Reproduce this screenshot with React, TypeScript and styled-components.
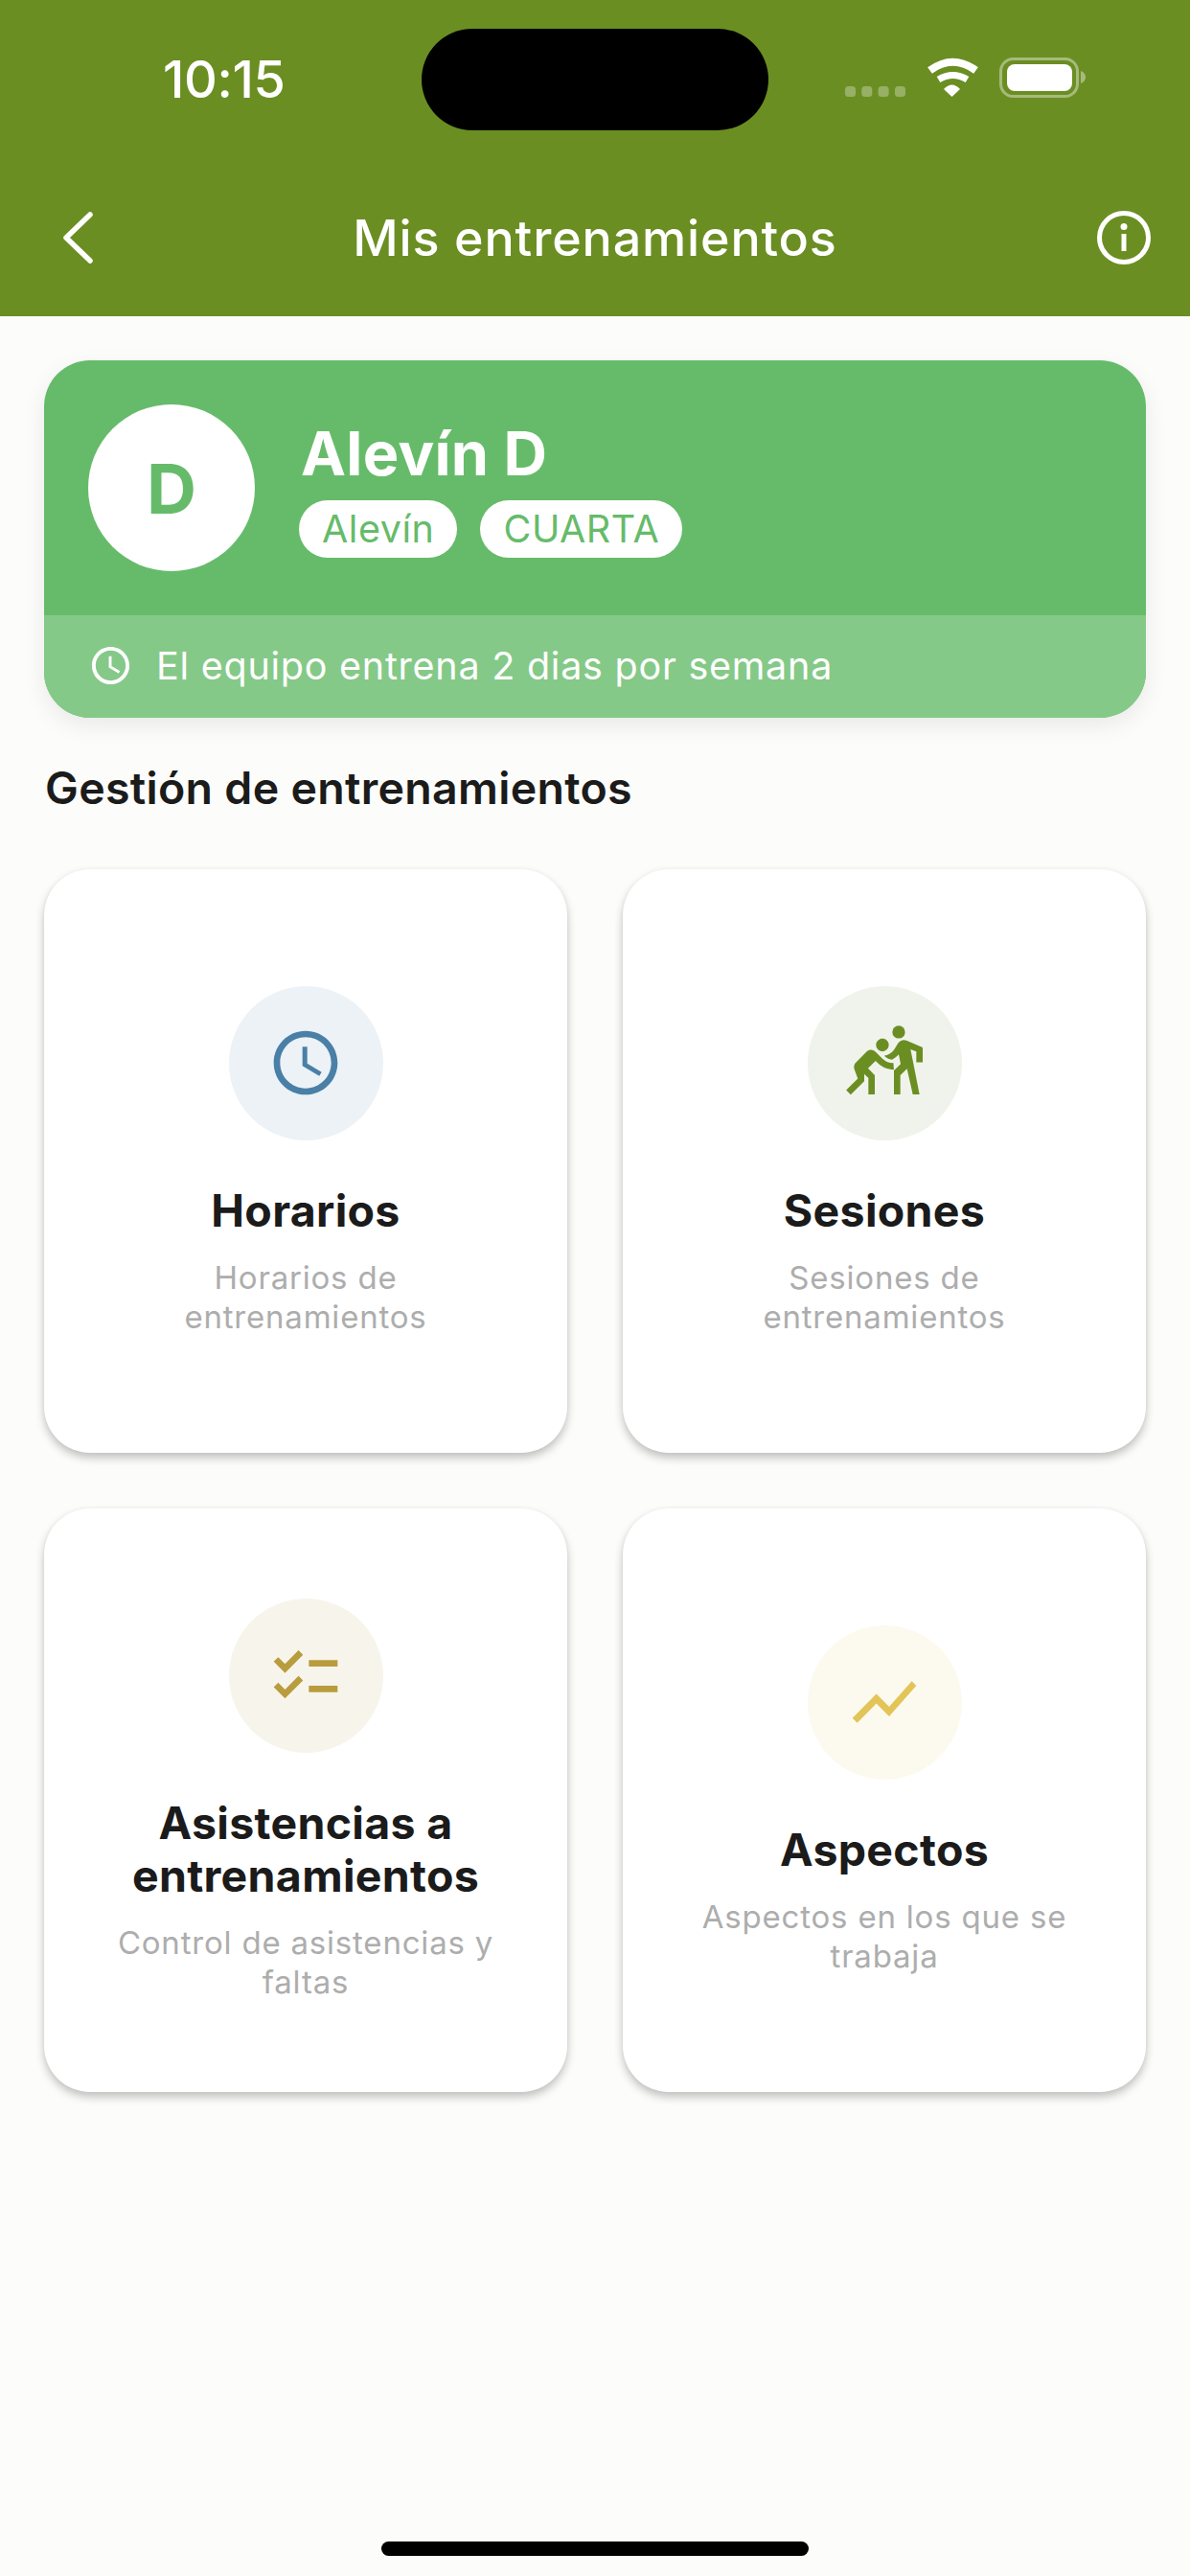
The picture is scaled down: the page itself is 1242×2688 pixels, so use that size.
import React from "react";
import styled, { createGlobalStyle } from "styled-components";
import { MdAccessTime, MdSportsKabaddi, MdChecklist, MdShowChart } from "react-icons/md";

const Global = createGlobalStyle`
  * { box-sizing: border-box; }
  html, body { margin: 0; padding: 0; background: #fcfcfa; }
  body { font-family: Inter, "Noto Sans", sans-serif; }
`;

const Screen = styled.div`
  width: 1242px;
  height: 2688px;
  display: flex;
  flex-direction: column;
  background: #fcfcfa;
  overflow: hidden;
`;
const Header = styled.header`
  height: 330px;
  background: #6b8e23;
  color: #fff;
  flex: none;
`;
const StatusBar = styled.div`
  display: grid;
  grid-template-columns: 440px 362px 1fr;
  padding-top: 30px;
  height: 136px;
`;
const Time = styled.div`
  padding: 23px 0 0 170px;
  font-size: 54px;
  line-height: 60px;
  font-weight: 500;
  letter-spacing: -0.4px;
`;
const Island = styled.div`
  height: 106px;
  background: #000;
  border-radius: 53px;
`;
const StatusIcons = styled.div`
  padding: 28px 0 0 80px;
`;
const NavRow = styled.div`
  margin-top: 62px;
  height: 100px;
  padding: 0 41px 0 65px;
  display: flex;
  align-items: center;
  justify-content: space-between;
`;
const NavTitle = styled.h1`
  margin: 0;
  font-size: 52px;
  font-weight: 500;
  letter-spacing: 0.85px;
`;
const Main = styled.main`
  flex: 1;
  padding: 46px 46px 0;
  display: flex;
  flex-direction: column;
`;
const TeamCard = styled.section`
  background: #66bb6a;
  border-radius: 48px;
  overflow: hidden;
  box-shadow: 0 8px 24px rgba(0, 0, 0, 0.08);
`;
const TeamInfo = styled.div`
  height: 266px;
  padding: 46px 46px 0;
  display: flex;
  gap: 46px;
`;
const Avatar = styled.div`
  width: 174px;
  height: 174px;
  border-radius: 50%;
  background: #fff;
  color: #66bb6a;
  font-size: 72px;
  font-weight: 700;
  display: flex;
  align-items: center;
  justify-content: center;
  flex: none;
`;
const TeamText = styled.div`
  display: flex;
  flex-direction: column;
`;
const TeamName = styled.div`
  color: #fff;
  font-size: 63px;
  line-height: 72px;
  font-weight: 700;
  letter-spacing: 0.3px;
  margin: 15px 0 0 2px;
`;
const Tags = styled.div`
  display: flex;
  gap: 24px;
  margin-top: 13px;
`;
const Tag = styled.span`
  height: 60px;
  padding: 0 24px;
  border-radius: 30px;
  background: #fff;
  color: #66bb6a;
  font-size: 39.5px;
  line-height: 60px;
  letter-spacing: 0.55px;
`;
const TeamFooter = styled.div`
  height: 107px;
  background: #85c988;
  color: #fff;
  padding: 0 0 2px 46px;
  display: flex;
  align-items: center;
  gap: 24px;
  font-size: 39.5px;
  letter-spacing: 0.75px;
`;
const SectionTitle = styled.h2`
  margin: 43px 0 0 1px;
  font-size: 46.5px;
  line-height: 60px;
  font-weight: 600;
  color: #1b1b1b;
  letter-spacing: 0.3px;
`;
const Grid = styled.div`
  margin-top: 55px;
  display: grid;
  grid-template-columns: 546px 546px;
  grid-auto-rows: 609px;
  column-gap: 58px;
  row-gap: 58px;
`;
const ActionCard = styled.article`
  background: #fff;
  border-radius: 48px;
  padding: 0 60px;
  display: flex;
  flex-direction: column;
  align-items: center;
  justify-content: center;
  text-align: center;
  box-shadow: 0 5px 10px rgba(0, 0, 0, 0.24), 0 0 4px rgba(0, 0, 0, 0.03);
`;
const IconCircle = styled.div<{ $bg: string; $fg: string }>`
  width: 161px;
  height: 161px;
  border-radius: 50%;
  background: ${(p) => p.$bg};
  color: ${(p) => p.$fg};
  display: flex;
  align-items: center;
  justify-content: center;
  flex: none;
`;
const CardTitle = styled.h3`
  margin: 46px 0 0;
  font-size: 46.5px;
  line-height: 55px;
  font-weight: 700;
  color: #1b1b1b;
  letter-spacing: 0.3px;
`;
const CardSub = styled.p`
  margin: 22px 0 0;
  font-size: 33px;
  line-height: 41px;
  color: #adadad;
  letter-spacing: 0.8px;
`;
const HomeBar = styled.div`
  width: 446px;
  height: 15px;
  border-radius: 8px;
  background: #000;
  margin: 0 auto 21px;
  flex: none;
`;

const cards = [
  { title: "Horarios", sub: "Horarios de entrenamientos", Icon: MdAccessTime, bg: "#ecf2f6", fg: "#4a7fa7" },
  { title: "Sesiones", sub: "Sesiones de entrenamientos", Icon: MdSportsKabaddi, bg: "#f0f3eb", fg: "#6b8e23" },
  { title: "Asistencias a entrenamientos", sub: "Control de asistencias y faltas", Icon: MdChecklist, bg: "#f7f5eb", fg: "#b89c3e" },
  { title: "Aspectos", sub: "Aspectos en los que se trabaja", Icon: MdShowChart, bg: "#fcfaef", fg: "#e3c457" },
];

const StatusGlyphs = () => (
  <svg width="252" height="50" viewBox="0 0 252 50" fill="none">
    {[0, 17.3, 34.6, 52].map((x) => (
      <rect key={x} x={x} y="32" width="11" height="11" rx="3.5" fill="#fff" opacity="0.3" />
    ))}
    <path d="M88.500 15.500Q112.500-2 136.500 15.500" stroke="#fff" strokeWidth="8" />
    <path d="M97.500 25Q112.500 16 127.500 25" stroke="#fff" strokeWidth="7" />
    <path d="M103 35Q111.500 26 120 35L111.500 43Z" fill="#fff" />
    <rect x="162.500" y="3.500" width="80" height="39" rx="13" stroke="#fff" strokeOpacity="0.4" strokeWidth="3" />
    <rect x="169" y="9" width="68" height="28" rx="8" fill="#fff" />
    <path d="M246 16c3 1 5 3.500 5 6.500s-2 5.500-5 6.500z" fill="#fff" fillOpacity="0.4" />
  </svg>
);

export default function App() {
  return (
    <Screen>
      <Global />
      <Header>
        <StatusBar>
          <Time>10:15</Time>
          <Island />
          <StatusIcons>
            <StatusGlyphs />
          </StatusIcons>
        </StatusBar>
        <NavRow>
          <svg width="32" height="54" viewBox="0 0 32 54" fill="none">
            <path d="M29 3L4 27l25 24" stroke="#fff" strokeWidth="5.500" strokeLinecap="round" strokeLinejoin="round" />
          </svg>
          <NavTitle>Mis entrenamientos</NavTitle>
          <svg width="56" height="56" viewBox="0 0 56 56" fill="none">
            <circle cx="28" cy="28" r="25.500" stroke="#fff" strokeWidth="5" />
            <rect x="25.500" y="24" width="5" height="18" fill="#fff" />
            <circle cx="28" cy="16.500" r="3.500" fill="#fff" />
          </svg>
        </NavRow>
      </Header>
      <Main>
        <TeamCard>
          <TeamInfo>
            <Avatar>D</Avatar>
            <TeamText>
              <TeamName>Alevín D</TeamName>
              <Tags>
                <Tag>Alevín</Tag>
                <Tag>CUARTA</Tag>
              </Tags>
            </TeamText>
          </TeamInfo>
          <TeamFooter>
            <MdAccessTime size={47} />
            El equipo entrena 2 dias por semana
          </TeamFooter>
        </TeamCard>
        <SectionTitle>Gestión de entrenamientos</SectionTitle>
        <Grid>
          {cards.map(({ title, sub, Icon, bg, fg }) => (
            <ActionCard key={title}>
              <IconCircle $bg={bg} $fg={fg}>
                <Icon size={80} />
              </IconCircle>
              <CardTitle>{title}</CardTitle>
              <CardSub>{sub}</CardSub>
            </ActionCard>
          ))}
        </Grid>
      </Main>
      <HomeBar />
    </Screen>
  );
}
